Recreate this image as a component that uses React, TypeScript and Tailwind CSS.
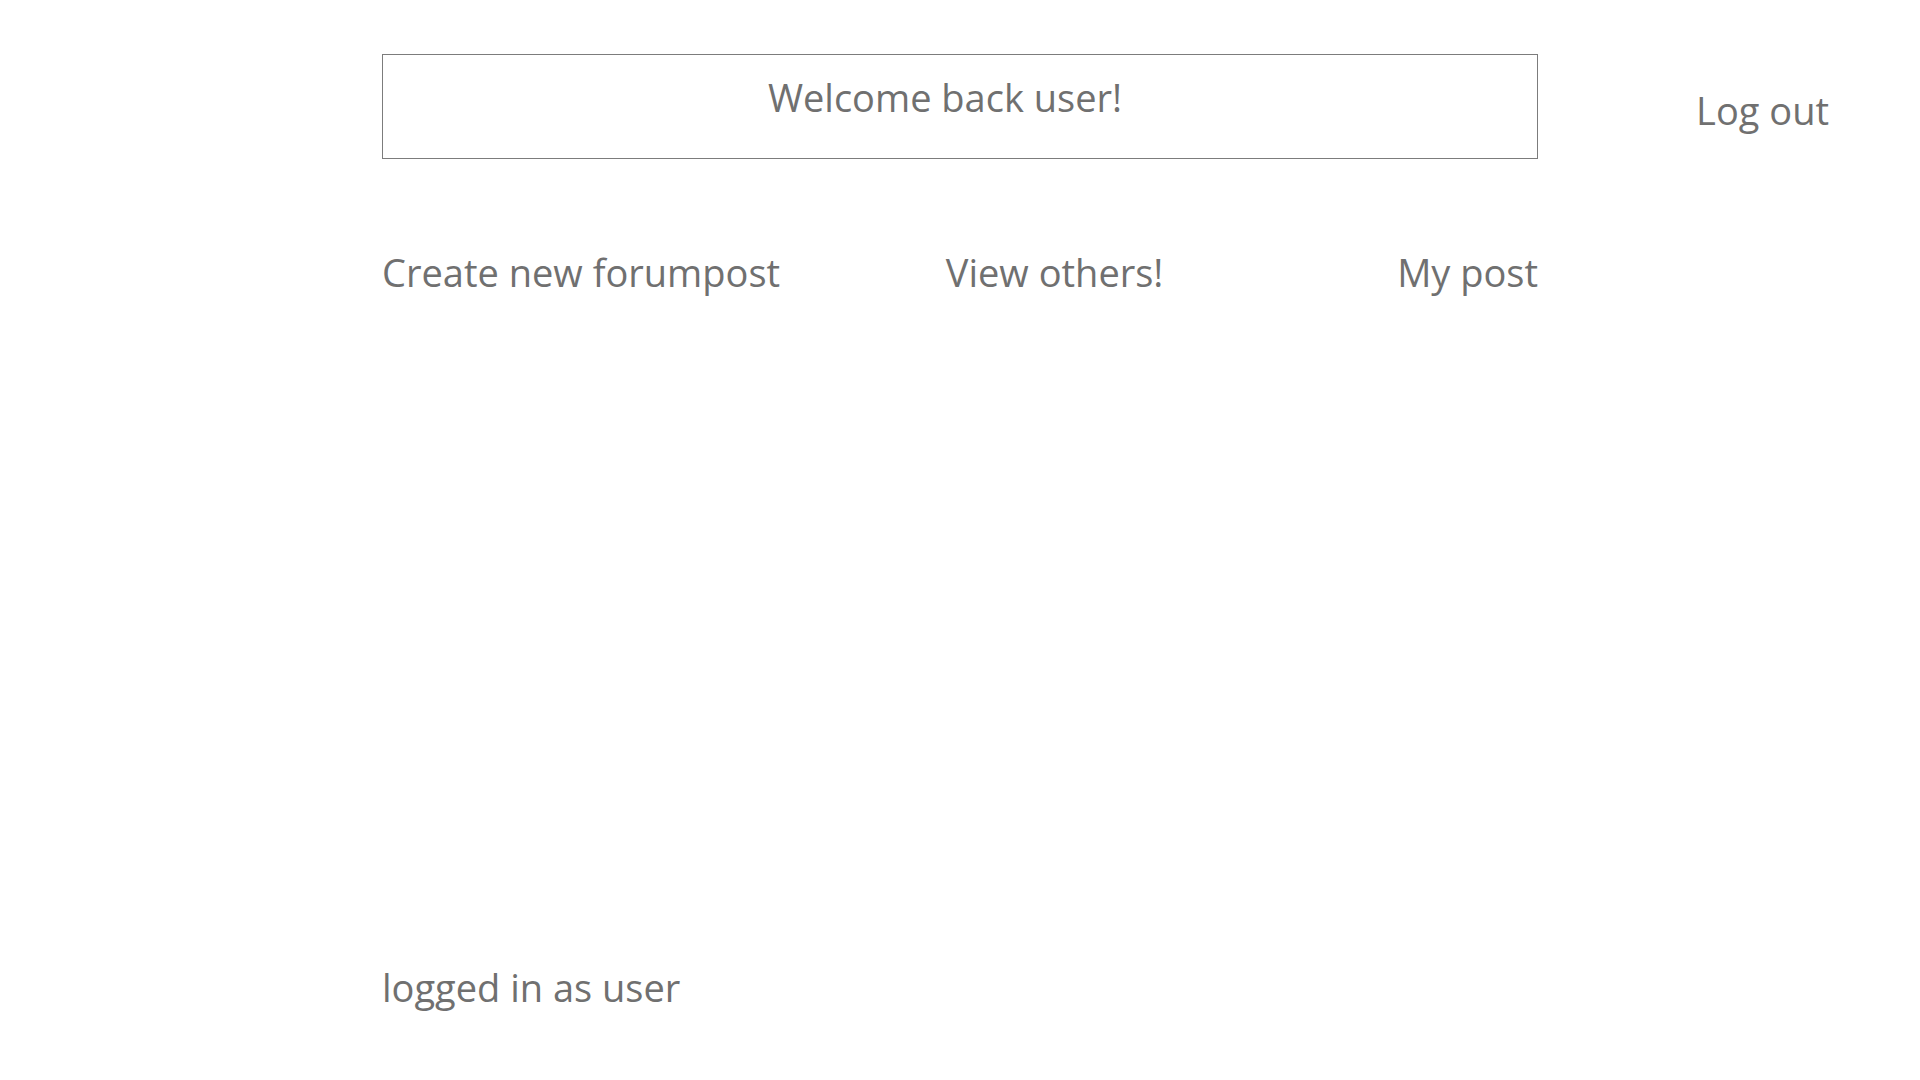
export default function App() {
  return (
    <div className="min-h-screen bg-white text-[#707070] font-['Open_Sans',sans-serif] font-normal">
      <div className="grid grid-cols-[1fr_1156px_1fr] pt-[54px]">
        <div />
        <div className="h-[105px] border border-[#7c7c7c] flex justify-center pt-[18px] pr-[30px]">
          <h1 className="text-[38px] leading-[48px]">Welcome back user!</h1>
        </div>
        <div className="flex justify-end pr-[91px] pt-[32px]">
          <a href="#" className="text-[38px] leading-[48px]">Log out</a>
        </div>
      </div>

      <nav className="w-[1156px] mx-auto mt-[89px] flex justify-between text-[38px] leading-[48px]">
        <a href="#">Create new forumpost</a>
        <a href="#" className="mr-[68px]">View others!</a>
        <a href="#">My post</a>
      </nav>

      <footer className="w-[1156px] mx-auto mt-[667px] text-[38px] leading-[48px]">
        logged in as user
      </footer>
    </div>
  );
}
